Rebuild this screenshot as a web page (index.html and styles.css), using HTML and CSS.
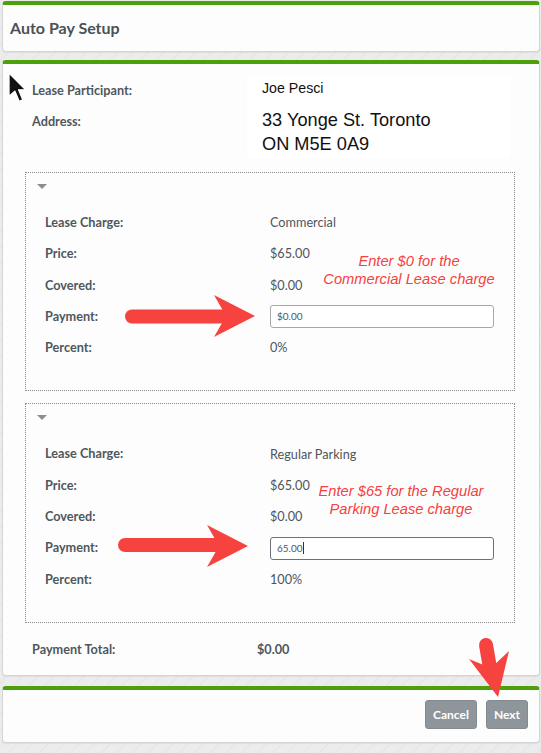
FILE: index.html
```html
<!DOCTYPE html>
<html>
<head>
<meta charset="utf-8">
<link rel="stylesheet" href="styles.css">
</head>
<body>
<div class="page">
  <section class="panel head-panel">
    <h1 class="title">Auto Pay Setup</h1>
  </section>

  <section class="panel main-panel">
    <div class="info">
      <div class="info-labels">
        <div class="label">Lease Participant:</div>
        <div class="label">Address:</div>
      </div>
      <div class="info-box">
        <div class="name">Joe Pesci</div>
        <div class="address">33 Yonge St. Toronto<br>ON M5E 0A9</div>
      </div>
    </div>

    <div class="charge">
      <div class="caret"></div>
      <div class="rows">
        <div class="label">Lease Charge:</div><div class="value">Commercial</div>
        <div class="label">Price:</div><div class="value">$65.00</div>
        <div class="label">Covered:</div><div class="value">$0.00</div>
        <div class="label">Payment:</div><div class="value"><div class="input">$0.00</div></div>
        <div class="label">Percent:</div><div class="value">0%</div>
      </div>
    </div>

    <div class="charge">
      <div class="caret"></div>
      <div class="rows">
        <div class="label">Lease Charge:</div><div class="value">Regular Parking</div>
        <div class="label">Price:</div><div class="value">$65.00</div>
        <div class="label">Covered:</div><div class="value">$0.00</div>
        <div class="label">Payment:</div><div class="value"><div class="input active">65.00<span class="caret-bar"></span></div></div>
        <div class="label">Percent:</div><div class="value">100%</div>
      </div>
    </div>

    <div class="total">
      <div class="label">Payment Total:</div>
      <div class="total-value">$0.00</div>
    </div>
  </section>

  <section class="panel foot-panel">
    <button class="btn">Cancel</button>
    <button class="btn">Next</button>
  </section>

  <div class="note note-1">Enter $0 for the<br>Commercial Lease charge</div>
  <div class="note note-2">Enter $65 for the Regular<br>Parking Lease charge</div>

  <svg class="overlay" width="541" height="753" viewBox="0 0 541 753">
    <g fill="#f7433f" stroke="none">
      <line x1="132" y1="316.5" x2="226" y2="316.5" stroke="#f7433f" stroke-width="14" stroke-linecap="round"/>
      <polygon points="214,295 255,316 214,337 226,316"/>
      <line x1="125" y1="545" x2="219" y2="545" stroke="#f7433f" stroke-width="14" stroke-linecap="round"/>
      <polygon points="207,525 248,546 207,567 219,546"/>
      <line x1="486" y1="645" x2="490" y2="668" stroke="#f7433f" stroke-width="14" stroke-linecap="round"/>
      <polygon points="469,659 491,668 509,651 498,697"/>
    </g>
    <g transform="translate(9,73) scale(1.45)">
      <polygon points="0,0 0,16 4,12.5 7,19.5 9.5,18.5 6.6,11.6 11.5,11.6" fill="#111" stroke="#fff" stroke-width="0.9" stroke-linejoin="round"/>
    </g>
  </svg>
</div>
</body>
</html>
```

FILE: styles.css
```css
* { box-sizing: border-box; }

html, body {
  margin: 0;
  padding: 0;
}

body {
  width: 541px;
  height: 753px;
  overflow: hidden;
  background-color: #e9e9e9;
  background-image: repeating-linear-gradient(135deg, #ececec 0px, #ececec 9px, #e4e4e4 10px, #ececec 11px);
  font-family: Lato, "Open Sans", sans-serif;
  color: #50575c;
}

.page {
  position: relative;
  width: 541px;
  height: 753px;
  padding-top: 1px;
}

.panel {
  margin: 0 1px 0 2px;
  background: #fdfdfd;
  border: 1px solid #d2d6d8;
  border-top: 4px solid #4ca00a;
  border-radius: 4px;
  box-shadow: 0 1px 1px rgba(0,0,0,0.06);
}

.head-panel {
  height: 51px;
}

.title {
  margin: 0;
  padding-left: 7px;
  line-height: 46px;
  font-size: 16px;
  font-weight: 700;
  color: #4a5157;
}

.main-panel {
  margin-top: 8px;
  height: 616px;
}

.label {
  font-size: 12.7px;
  font-weight: 700;
  color: #50575c;
  line-height: 31px;
  height: 31px;
  white-space: nowrap;
}

.info {
  display: flex;
  padding-left: 29px;
}

.info-labels {
  width: 215px;
  padding-top: 11px;
}

.info-box {
  margin-top: 12px;
  width: 263px;
  height: 82px;
  background: #ffffff;
  padding: 3px 0 0 15px;
  font-family: "Liberation Sans", Arial, sans-serif;
  color: #111;
}

.name {
  font-size: 14.2px;
  line-height: 18px;
}

.address {
  margin-top: 11px;
  font-size: 18.2px;
  line-height: 24px;
}

.charge {
  margin: 14px 24px 0 22px;
  border: 1px dotted #8a8a8a;
  padding: 11px 0 27px 19px;
}

.charge + .charge {
  margin-top: 12px;
}

.caret {
  width: 0;
  height: 0;
  margin-left: -8px;
  border-left: 5px solid transparent;
  border-right: 5px solid transparent;
  border-top: 5px solid #8d8d8d;
}

.rows {
  margin-top: 18px;
  display: grid;
  grid-template-columns: 225px 224px;
  grid-auto-rows: 31.3px;
}

.value {
  font-size: 12.7px;
  line-height: 31px;
  color: #4f565b;
  display: flex;
  align-items: center;
}

.input {
  width: 224px;
  height: 23px;
  border: 1px solid #a3a9ad;
  border-radius: 3px;
  background: #fff;
  font-size: 10px;
  line-height: 21px;
  padding-left: 6px;
  color: #4f565b;
}

.input.active {
  border-color: #6b7176;
}

.caret-bar {
  display: inline-block;
  width: 1px;
  height: 12px;
  background: #333;
  vertical-align: -2px;
}

.total {
  display: flex;
  margin-top: 11px;
  padding-left: 29px;
}

.total .label {
  width: 225px;
}

.total-value {
  font-size: 12.7px;
  font-weight: 700;
  line-height: 31px;
  color: #50575c;
}

.foot-panel {
  margin-top: 10px;
  height: 57px;
  display: flex;
  justify-content: flex-end;
  align-items: flex-start;
  gap: 9px;
  padding: 10px 11px 0 0;
}

.btn {
  height: 29px;
  padding: 0 7px;
  border: 1px solid #848b90;
  border-radius: 3px;
  background: #8f969b;
  color: #fff;
  font-family: Lato, "Open Sans", sans-serif;
  font-size: 12px;
  font-weight: 700;
}

.note {
  position: absolute;
  font-family: "Liberation Sans", Arial, sans-serif;
  font-style: italic;
  font-size: 14.7px;
  line-height: 18px;
  color: #f5413f;
  text-align: center;
}

.note-1 {
  left: 314px;
  top: 252px;
  width: 190px;
}

.note-2 {
  left: 304px;
  top: 482px;
  width: 194px;
}

.overlay {
  position: absolute;
  left: 0;
  top: 0;
  pointer-events: none;
}
```
